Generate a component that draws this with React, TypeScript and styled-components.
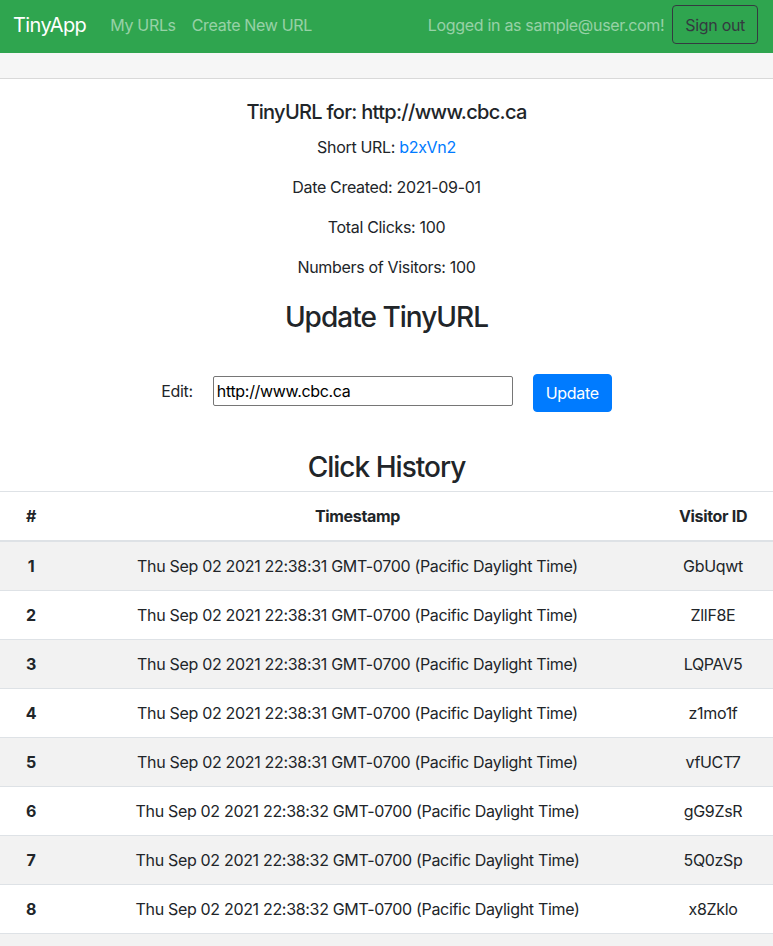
import React from "react";
import styled, { createGlobalStyle } from "styled-components";

const GlobalStyle = createGlobalStyle`
  html, body { margin: 0; padding: 0; background: #fff; }
  body {
    font-family: Inter, "Noto Sans", "Liberation Sans", sans-serif;
    font-size: 16px;
    line-height: 1.5;
    letter-spacing: -0.02em;
    color: #212529;
  }
  * { box-sizing: border-box; }
`;

const Navbar = styled.nav`
  display: flex;
  align-items: center;
  height: 53px;
  padding: 0 15px 4px 13px;
  background: #2fa54f;
`;

const Brand = styled.a`
  font-size: 20px;
  line-height: 30px;
  letter-spacing: -0.03em;
  color: #fff;
  margin-right: 16px;
  text-decoration: none;
`;

const NavLink = styled.a`
  padding: 8px;
  color: rgba(255, 255, 255, 0.5);
  text-decoration: none;
`;

const NavRight = styled.div`
  margin-left: auto;
  display: flex;
  align-items: center;
  gap: 8px;
`;

const NavText = styled.span`
  color: rgba(255, 255, 255, 0.5);
`;

const OutlineButton = styled.button`
  font: inherit;
  letter-spacing: inherit;
  height: 39px;
  padding: 0 12px;
  background: transparent;
  color: #343a40;
  border: 1px solid #343a40;
  border-radius: 4px;
`;

const SubBar = styled.div`
  height: 26px;
  background: #f6f6f6;
  border-bottom: 1px solid #d9d9d9;
`;

const Main = styled.main`
  display: flex;
  flex-direction: column;
  align-items: center;
  text-align: center;
`;

const Title = styled.h5`
  font-size: 20px;
  font-weight: 500;
  line-height: 24px;
  letter-spacing: -0.035em;
  margin: 21px 0 11px;
`;

const Info = styled.p`
  margin: 0 0 16px;
`;

const Link = styled.a`
  color: #007bff;
  text-decoration: none;
`;

const Heading = styled.h3<{ $top?: number; $bottom?: number }>`
  font-size: 28px;
  font-weight: 500;
  line-height: 34px;
  letter-spacing: -0.035em;
  margin: ${(p) => `${p.$top ?? 0}px 0 ${p.$bottom ?? 0}px`};
`;

const Form = styled.form`
  display: flex;
  align-items: center;
  gap: 20px;
  margin: 38px 0 40px;
`;

const Label = styled.label``;

const Input = styled.input`
  width: 300px;
  height: 30px;
  padding: 0 3px;
  font: inherit;
  letter-spacing: inherit;
  color: #000;
  border: 1px solid #767676;
  border-radius: 2px;
`;

const PrimaryButton = styled.button`
  font: inherit;
  letter-spacing: inherit;
  height: 38px;
  margin: 2px 0 -2px;
  padding: 0 12px;
  color: #fff;
  background: #007bff;
  border: 1px solid #007bff;
  border-radius: 4px;
`;

const Table = styled.table`
  width: 100%;
  border-collapse: collapse;
  margin-top: 7px;
`;

const Th = styled.th`
  padding: 12px;
  line-height: 24px;
  font-weight: 700;
  border-top: 1px solid #dee2e6;
  border-bottom: 2px solid #dee2e6;
`;

const Row = styled.tr<{ $striped: boolean }>`
  background: ${(p) => (p.$striped ? "#f2f2f2" : "#fff")};
`;

const Td = styled.td<{ $bold?: boolean }>`
  padding: 12px;
  line-height: 24px;
  border-top: 1px solid #dee2e6;
  font-weight: ${(p) => (p.$bold ? 700 : 400)};
`;

const rows = [
  ["Thu Sep 02 2021 22:38:31 GMT-0700 (Pacific Daylight Time)", "GbUqwt"],
  ["Thu Sep 02 2021 22:38:31 GMT-0700 (Pacific Daylight Time)", "ZllF8E"],
  ["Thu Sep 02 2021 22:38:31 GMT-0700 (Pacific Daylight Time)", "LQPAV5"],
  ["Thu Sep 02 2021 22:38:31 GMT-0700 (Pacific Daylight Time)", "z1mo1f"],
  ["Thu Sep 02 2021 22:38:31 GMT-0700 (Pacific Daylight Time)", "vfUCT7"],
  ["Thu Sep 02 2021 22:38:32 GMT-0700 (Pacific Daylight Time)", "gG9ZsR"],
  ["Thu Sep 02 2021 22:38:32 GMT-0700 (Pacific Daylight Time)", "5Q0zSp"],
  ["Thu Sep 02 2021 22:38:32 GMT-0700 (Pacific Daylight Time)", "x8Zklo"],
  ["Thu Sep 02 2021 22:38:32 GMT-0700 (Pacific Daylight Time)", "Rq3mTe"],
];

export default function App() {
  return (
    <>
      <GlobalStyle />
      <Navbar>
        <Brand href="#">TinyApp</Brand>
        <NavLink href="#">My URLs</NavLink>
        <NavLink href="#">Create New URL</NavLink>
        <NavRight>
          <NavText>Logged in as sample@user.com!</NavText>
          <OutlineButton>Sign out</OutlineButton>
        </NavRight>
      </Navbar>
      <SubBar />
      <Main>
        <Title>TinyURL for: http://www.cbc.ca</Title>
        <Info>
          Short URL: <Link href="#">b2xVn2</Link>
        </Info>
        <Info>Date Created: 2021-09-01</Info>
        <Info>Total Clicks: 100</Info>
        <Info>Numbers of Visitors: 100</Info>
        <Heading $top={5}>Update TinyURL</Heading>
        <Form onSubmit={(e) => e.preventDefault()}>
          <Label htmlFor="edit">Edit:</Label>
          <Input id="edit" type="text" defaultValue="http://www.cbc.ca" />
          <PrimaryButton type="submit">Update</PrimaryButton>
        </Form>
        <Heading>Click History</Heading>
        <Table>
          <colgroup>
            <col style={{ width: 62 }} />
            <col />
            <col style={{ width: 120 }} />
          </colgroup>
          <thead>
            <tr>
              <Th>#</Th>
              <Th>Timestamp</Th>
              <Th>Visitor ID</Th>
            </tr>
          </thead>
          <tbody>
            {rows.map(([ts, id], i) => (
              <Row key={i} $striped={i % 2 === 0}>
                <Td $bold>{i + 1}</Td>
                <Td>{ts}</Td>
                <Td>{id}</Td>
              </Row>
            ))}
          </tbody>
        </Table>
      </Main>
    </>
  );
}
